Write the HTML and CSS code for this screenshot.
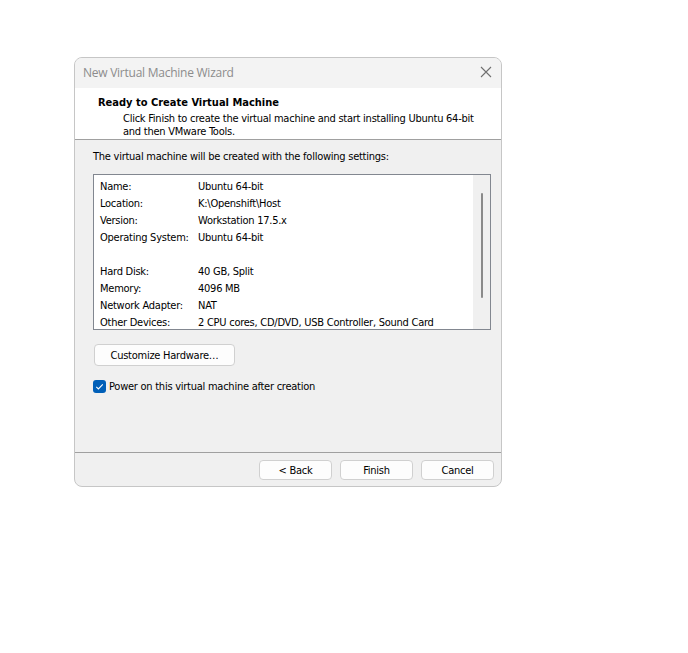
FILE: index.html
```html
<!DOCTYPE html>
<html>
<head>
<meta charset="UTF-8">
<title>New Virtual Machine Wizard</title>
<link rel="stylesheet" href="styles.css">
</head>
<body>

<div class="dialog">

  <div class="titlebar">
    <span class="caption">New Virtual Machine Wizard</span>
    <svg class="close" width="12" height="12" viewBox="0 0 12 12">
      <path d="M1 1L11 11M11 1L1 11" stroke="#707070" stroke-width="1.1" fill="none"/>
    </svg>
  </div>

  <div class="header">
    <div class="heading">Ready to Create Virtual Machine</div>
    <div class="subtitle">Click Finish to create the virtual machine and start installing Ubuntu 64-bit<br>and then VMware Tools.</div>
  </div>

  <div class="content">
    <div class="intro">The virtual machine will be created with the following settings:</div>

    <div class="listbox">
      <div class="rows">
        <div class="row"><span class="key">Name:</span><span>Ubuntu 64-bit</span></div>
        <div class="row"><span class="key">Location:</span><span>K:\Openshift\Host</span></div>
        <div class="row"><span class="key">Version:</span><span>Workstation 17.5.x</span></div>
        <div class="row"><span class="key">Operating System:</span><span>Ubuntu 64-bit</span></div>
        <div class="row"></div>
        <div class="row"><span class="key">Hard Disk:</span><span>40 GB, Split</span></div>
        <div class="row"><span class="key">Memory:</span><span>4096 MB</span></div>
        <div class="row"><span class="key">Network Adapter:</span><span>NAT</span></div>
        <div class="row"><span class="key">Other Devices:</span><span>2 CPU cores, CD/DVD, USB Controller, Sound Card</span></div>
      </div>
      <div class="scrollbar"><div class="thumb"></div></div>
    </div>

    <button class="btn wide">Customize Hardware…</button>

    <label class="check">
      <span class="box">
        <svg width="13" height="13" viewBox="0 0 13 13">
          <path d="M3.3 6.8L5.4 8.9L9.8 4.4" stroke="#fff" stroke-width="1.1" fill="none"/>
        </svg>
      </span>
      Power on this virtual machine after creation
    </label>
  </div>

  <div class="footer">
    <button class="btn">&lt; Back</button>
    <button class="btn">Finish</button>
    <button class="btn">Cancel</button>
  </div>

</div>

</body>
</html>
```

FILE: styles.css
```css
body{
  margin:0;
  background:#fff;
  font-family:"DejaVu Sans Condensed","DejaVu Sans",sans-serif;
  font-size:11px;
  letter-spacing:-0.25px;
  color:#000;
}

.dialog{
  box-sizing:border-box;
  width:428px;
  height:430px;
  margin:57px 0 0 74px;
  border:1px solid #c6c6c6;
  border-radius:8px;
  background:#f0f0f0;
  overflow:hidden;
  display:flex;
  flex-direction:column;
}

.titlebar{
  height:30px;
  box-sizing:border-box;
  display:flex;
  align-items:center;
  justify-content:space-between;
  padding:0 9px 2px 8px;
  background:#f3f3f3;
}

.caption{
  font-family:"Open Sans",sans-serif;
  font-size:12px;
  letter-spacing:-0.25px;
  color:#8c8c8c;
}

.header{
  background:#fff;
  height:52px;
  box-sizing:border-box;
  padding:8px 0 0 23px;
  border-bottom:1px solid #a0a0a0;
}

.heading{
  font-weight:bold;
  letter-spacing:0;
  line-height:14px;
}

.subtitle{
  margin:2px 0 0 25px;
  line-height:13px;
}

.content{
  flex:1;
  padding:9px 10px 0 18px;
}

.intro{
  line-height:15px;
}

.listbox{
  margin-top:10px;
  width:398px;
  height:156px;
  box-sizing:border-box;
  border:1px solid #828790;
  background:#fff;
  display:flex;
}

.rows{
  flex:1;
  padding:3px 0 0 6px;
}

.row{
  height:17px;
  line-height:17px;
  display:flex;
  white-space:nowrap;
}

.key{
  width:98px;
}

.scrollbar{
  width:17px;
  background:#f0f0f0;
  display:flex;
  justify-content:center;
}

.thumb{
  width:2px;
  height:105px;
  margin-top:18px;
  background:#8a8a8a;
  border-radius:1px;
}

.btn{
  font-family:inherit;
  font-size:11px;
  letter-spacing:inherit;
  color:#000;
  background:#fdfdfd;
  border:1px solid #d0d0d0;
  border-radius:4px;
  width:73px;
  height:20px;
  padding:0;
}

.btn.wide{
  display:block;
  width:141px;
  height:22px;
  margin:14px 0 0 1px;
}

.check{
  display:flex;
  align-items:center;
  gap:3px;
  margin-top:13px;
  line-height:15px;
}

.box{
  width:13px;
  height:13px;
  border-radius:3px;
  background:#005fb8;
  display:flex;
}

.footer{
  height:34px;
  border-top:1px solid #a0a0a0;
  display:flex;
  justify-content:flex-end;
  align-items:flex-start;
  gap:8px;
  padding:7px 7px 0 0;
  box-sizing:border-box;
}
```
